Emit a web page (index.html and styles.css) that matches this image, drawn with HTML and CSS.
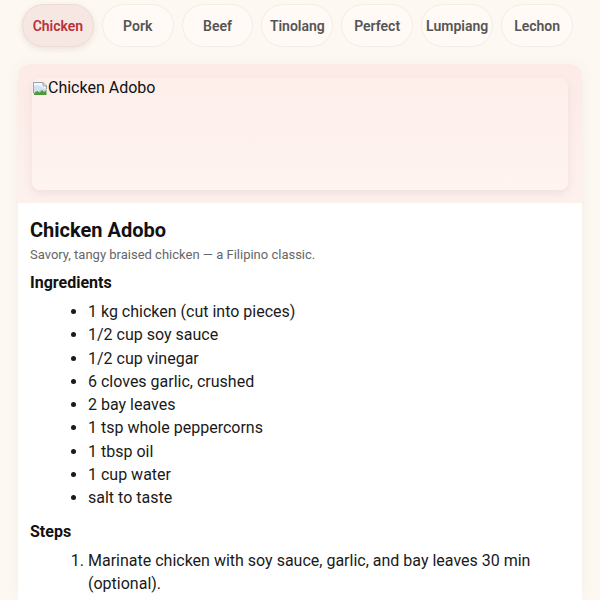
FILE: index.html
```html
<!DOCTYPE html>
<html>
<head>
<meta charset="utf-8">
<link rel="stylesheet" href="styles.css">
</head>
<body>
<div class="page">
  <nav class="chips">
    <button class="chip active">Chicken</button>
    <button class="chip">Pork</button>
    <button class="chip">Beef</button>
    <button class="chip">Tinolang</button>
    <button class="chip">Perfect</button>
    <button class="chip">Lumpiang</button>
    <button class="chip">Lechon</button>
  </nav>
  <article class="card">
    <div class="hero">
      <div class="img-box">
        <span class="broken">
          <svg class="broken-icon" width="16" height="16" viewBox="0 0 16 16">
            <path d="M1.5 2.5 H11 L14.5 6 V9 L12 11 L9.5 9.5 L7 12 L4.5 10.5 L1.5 13 Z" fill="#f4f6f8" stroke="#9aa3ad" stroke-width="1"/>
            <path d="M2 6 Q6 4 10 7 L12 8.5 L14 8 V9 L12 11 L9.5 9.5 L7 12 L4.5 10.5 L2 12.5 Z" fill="#cfe3f3"/>
            <path d="M2 13.5 L5 11 L7.5 12.5 L10 10 L12 12 L14.5 10 V15 H2 Z" fill="#4c9a3c"/>
            <path d="M11 2.5 V6 H14.5" fill="none" stroke="#9aa3ad" stroke-width="1"/>
          </svg>Chicken Adobo</span>
      </div>
    </div>
    <div class="content">
      <h2 class="title">Chicken Adobo</h2>
      <p class="subtitle">Savory, tangy braised chicken — a Filipino classic.</p>
      <h3 class="section">Ingredients</h3>
      <ul class="list">
        <li>1 kg chicken (cut into pieces)</li>
        <li>1/2 cup soy sauce</li>
        <li>1/2 cup vinegar</li>
        <li>6 cloves garlic, crushed</li>
        <li>2 bay leaves</li>
        <li>1 tsp whole peppercorns</li>
        <li>1 tbsp oil</li>
        <li>1 cup water</li>
        <li>salt to taste</li>
      </ul>
      <h3 class="section steps">Steps</h3>
      <ol class="list">
        <li>Marinate chicken with soy sauce, garlic, and bay leaves 30 min (optional).</li>
        <li>Heat oil in a pan, sear chicken until lightly browned.</li>
        <li>Add marinade, vinegar, water and peppercorns. Do not stir until it boils.</li>
        <li>Simmer 30–40 minutes until tender. Season with salt.</li>
      </ol>
    </div>
  </article>
</div>
</body>
</html>
```

FILE: styles.css
```css
html, body {
  margin: 0;
  padding: 0;
  background: #fdf8f2;
  font-family: Roboto, "Liberation Sans", Arial, sans-serif;
  color: #111;
}

.page {
  height: 600px;
  display: flex;
  flex-direction: column;
}

.chips {
  display: flex;
  gap: 8px;
  padding: 4px 27px 0 22px;
}

.chip {
  flex: 1 1 0;
  height: 43px;
  padding: 0 4px;
  border-radius: 22px;
  border: 1px solid #f5ede5;
  background: #fffaf5;
  font-family: Roboto, "Liberation Sans", Arial, sans-serif;
  font-size: 14px;
  font-weight: 600;
  color: #555;
  white-space: nowrap;
}

.chip.active {
  background: #f6e7e3;
  border-color: #ecdcd7;
  color: #b8323a;
  box-shadow: 0 2px 6px rgba(120, 60, 50, 0.12);
}

.card {
  margin: 17px 18px 0 18px;
  height: 533px;
  border-radius: 12px;
  background: #fff;
  box-shadow: 0 2px 14px rgba(120, 90, 70, 0.07);
  display: flex;
  flex-direction: column;
}

.hero {
  background: linear-gradient(#fcebe7, #fdf1ee);
  border-radius: 12px 12px 0 0;
  padding: 14px 14px 13px 14px;
}

.img-box {
  height: 112px;
  border-radius: 8px;
  background: linear-gradient(#fdeeea, #fff4f1);
  box-shadow: 0 4px 10px rgba(150, 90, 80, 0.10);
}

.broken {
  display: inline-flex;
  align-items: center;
  font-size: 16px;
  line-height: 18px;
  color: #111;
  padding-top: 1px;
}

.broken-icon {
  width: 16px;
  height: 16px;
  flex: none;
}

.content {
  flex: 1;
  background: #fff;
  border-radius: 6px 6px 12px 12px;
  padding: 14px 12px 0 12px;
}

.title {
  margin: 0;
  font-size: 20px;
  font-weight: 700;
  line-height: 26px;
  color: #111;
}

.subtitle {
  margin: 3px 0 0 0;
  font-size: 13px;
  line-height: 18px;
  color: #666;
}

.section {
  margin: 8px 0 0 0;
  font-size: 16px;
  font-weight: 700;
  line-height: 21px;
  color: #111;
}

.section.steps {
  margin-top: 11px;
}

.list {
  margin: 7px 0 0 0;
  padding-left: 58px;
  font-size: 16px;
  line-height: 23.3px;
  color: #1a1a1a;
}
```
